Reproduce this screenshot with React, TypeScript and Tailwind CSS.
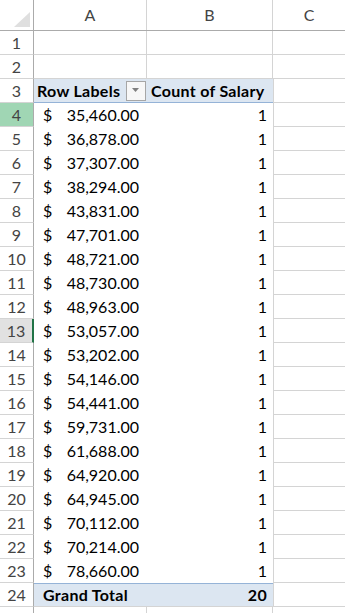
import React from "react";

const values = [
  "35,460.00","36,878.00","37,307.00","38,294.00","43,831.00","47,701.00","48,721.00","48,730.00","48,963.00","53,057.00",
  "53,202.00","54,146.00","54,441.00","59,731.00","61,688.00","64,920.00","64,945.00","70,112.00","70,214.00","78,660.00",
];

const font = { fontFamily: "Lato, 'Open Sans', sans-serif" };

function RowHeader({ n, variant }: { n?: number; variant?: "green" | "sel" }) {
  let cls = "bg-white border-r border-r-[#ababab]";
  if (variant === "green") cls = "bg-[#a0d6b4] border-r border-r-[#ababab]";
  if (variant === "sel") cls = "bg-[#e1e1e1] border-r-2 border-r-[#217346]";
  return (
    <div className={`w-[34px] shrink-0 h-full border-b border-b-[#d4d4d4] flex items-center justify-center text-[16px] text-[#444] ${cls}`}>
      {n}
    </div>
  );
}

function EmptyRow({ n }: { n?: number }) {
  return (
    <div className="flex h-[24px]">
      <RowHeader n={n} />
      <div className="w-[113px] shrink-0 border-r border-b border-[#d4d4d4]" />
      <div className="w-[126px] shrink-0 border-r border-b border-[#d4d4d4]" />
      <div className="flex-1 border-b border-[#d4d4d4]" />
    </div>
  );
}

export default function App() {
  return (
    <div className="w-[345px] h-[613px] overflow-hidden bg-white text-black" style={font}>
      {/* column header */}
      <div className="flex h-[31px] border-b border-[#ababab]">
        <div className="w-[34px] shrink-0 border-r border-[#ababab] relative">
          <svg width="34" height="30" className="absolute left-0 top-0">
            <polygon points="14,27 30,27 30,12" fill="#dfdfdf" />
          </svg>
        </div>
        <div className="w-[113px] shrink-0 border-r border-[#d4d4d4] flex items-center justify-center text-[16px] text-[#444]">A</div>
        <div className="w-[126px] shrink-0 border-r border-[#d4d4d4] flex items-center justify-center text-[16px] text-[#444]">B</div>
        <div className="flex-1 flex items-center justify-center text-[16px] text-[#444]">C</div>
      </div>
      <EmptyRow n={1} />
      <EmptyRow n={2} />
      {/* pivot header row */}
      <div className="flex h-[24px]">
        <RowHeader n={3} />
        <div className="w-[239px] shrink-0 bg-[#dce6f1] border-b border-[#95b3d7] flex items-center text-[16px] font-bold tracking-[0.3px]">
          <div className="w-[113px] shrink-0 flex items-center pl-[3px]">
            <span>Row Labels</span>
            <div className="ml-auto mr-[1px] w-[20px] h-[20px] border border-[#a6a6a6] bg-[#f7f7f7] flex items-center justify-center">
              <svg width="8" height="5"><polygon points="0,0 7,0 3.5,4" fill="#7f7f7f" /></svg>
            </div>
          </div>
          <div className="flex-1 pl-[4px] whitespace-nowrap">Count of Salary</div>
        </div>
        <div className="w-[1px] shrink-0 border-b border-[#d4d4d4] bg-[#d4d4d4]" />
        <div className="flex-1 border-b border-[#d4d4d4]" />
      </div>
      {values.map((v, i) => {
        const n = i + 4;
        return (
          <div key={n} className="flex h-[24px]">
            <RowHeader n={n} variant={n === 4 ? "green" : n === 13 ? "sel" : undefined} />
            <div className="w-[239px] shrink-0 flex items-center text-[16px] bg-white">
              <div className="w-[113px] shrink-0 flex items-center pl-[9px] pr-[8px]">
                <span>$</span>
                <span className="ml-auto">{v}</span>
              </div>
              <div className="flex-1 text-right pr-[6px]">1</div>
            </div>
            <div className="w-[1px] shrink-0 bg-[#d4d4d4]" />
            <div className="flex-1 border-b border-[#d4d4d4]" />
          </div>
        );
      })}
      {/* grand total */}
      <div className="flex h-[24px]">
        <RowHeader n={24} />
        <div className="w-[239px] shrink-0 bg-[#dce6f1] border-t border-[#95b3d7] border-b border-b-[#d4d4d4] flex items-center text-[16px] font-bold tracking-[0.3px]">
          <div className="w-[113px] shrink-0 pl-[9px]">Grand Total</div>
          <div className="flex-1 text-right pr-[6px]">20</div>
        </div>
        <div className="w-[1px] shrink-0 bg-[#d4d4d4]" />
        <div className="flex-1 border-b border-[#d4d4d4]" />
      </div>
      <EmptyRow />
    </div>
  );
}
